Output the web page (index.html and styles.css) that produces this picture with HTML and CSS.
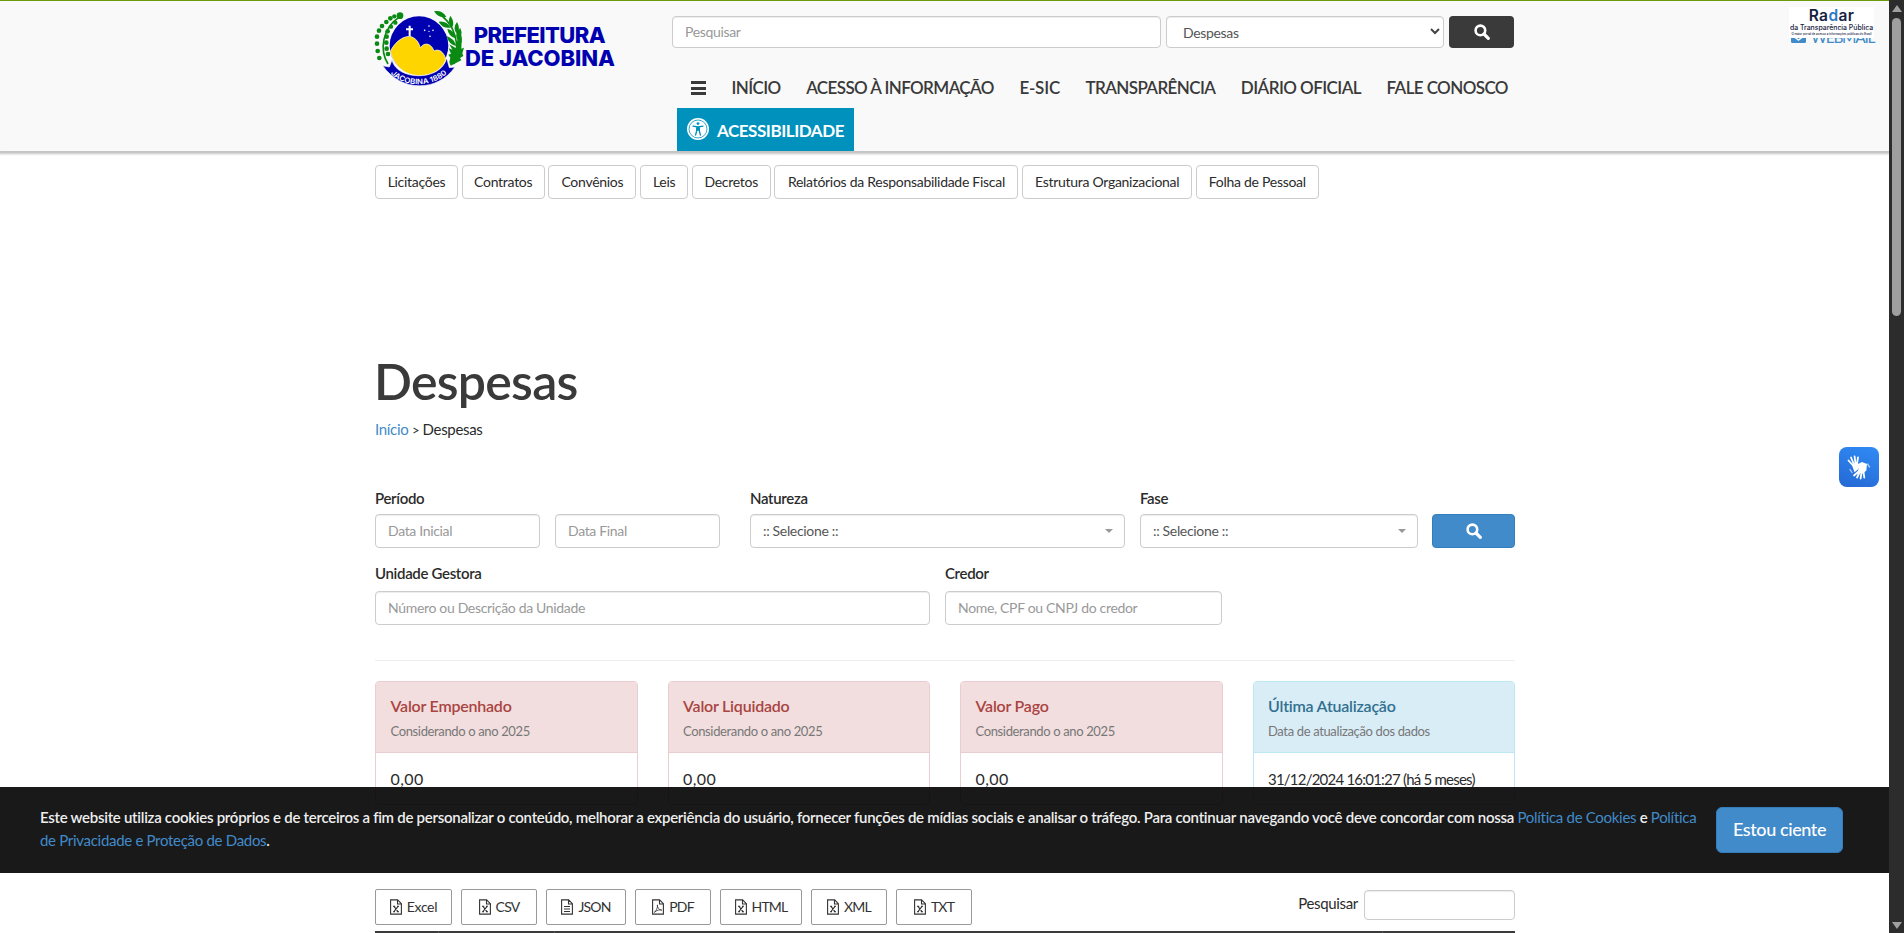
FILE: index.html
```html
<!DOCTYPE html>
<html lang="pt-BR">
<head>
<meta charset="utf-8">
<title>Despesas</title>
<link rel="stylesheet" href="styles.css">
</head>
<body>
<svg class="defs" aria-hidden="true">
  <symbol id="search" viewBox="0 0 16 16"><circle cx="6.4" cy="6.4" r="4.8" fill="none" stroke="currentColor" stroke-width="2.6"/><path d="M10 10l4.3 4.3" stroke="currentColor" stroke-width="3.2" stroke-linecap="round"/></symbol>
  <symbol id="xfile" viewBox="0 0 12 16"><path d="M.6 .9h7l3.8 3.8v10.4H.6zM7.5 1v4h4" fill="none" stroke="currentColor" stroke-width="1.1"/><path d="M3.8 7.2l4.4 5.6M8.2 7.2l-4.4 5.6M3 7.2h2.2M7 7.2h2M3 12.8h2M6.800 12.800h2.200" stroke="currentColor" stroke-width="1.1"/></symbol>
  <symbol id="tfile" viewBox="0 0 12 16"><path d="M.6 .9h7l3.8 3.800v10.400H.6zM7.500 1v4h4M3 7.500h6M3 10h6M3 12.500h6" fill="none" stroke="currentColor" stroke-width="1.1"/></symbol>
  <symbol id="pfile" viewBox="0 0 12 16"><path d="M.6 .9h7l3.800 3.800v10.400H.6zM7.500 1v4h4" fill="none" stroke="currentColor" stroke-width="1.1"/><path d="M2.200 13.400C4 12.500 6 8.500 5.400 5.900 5 7.500 6.500 11 9.900 11.200 8.500 10.400 5 10.900 2.200 13.400z" fill="none" stroke="currentColor" stroke-width=".8"/></symbol>
</svg>

<div class="page">
  <header class="header">
    <div class="container header-inner">
      <svg class="logo" viewBox="30 15 750 255">
        <g fill="none" stroke="#0a8a12" stroke-width="5">
          <path d="M84 192C58 150 66 84 120 50"/>
          <path d="M282 192C300 140 290 70 228 36"/>
        </g>
        <g fill="#0a8a12">
          <circle cx="120" cy="47" r="10"/><circle cx="103" cy="49" r="6.500"/><circle cx="91" cy="55" r="7"/><circle cx="106" cy="68" r="6.500"/><circle cx="79" cy="66" r="7"/><circle cx="93" cy="80" r="6.500"/><circle cx="66" cy="78" r="7"/><circle cx="83" cy="94" r="7"/><circle cx="57" cy="92" r="7"/><circle cx="80" cy="110" r="7"/><circle cx="51" cy="110" r="7"/><circle cx="79" cy="128" r="7"/><circle cx="51" cy="131" r="7"/><circle cx="80" cy="146" r="7"/><circle cx="53" cy="153" r="7"/><circle cx="84" cy="162" r="7"/><circle cx="58" cy="174" r="7"/>
          <path d="M222 34q25-4 37 17q-23 5-37-17zM271 47q15 20 5 36q-16-15-5-36zM236 65q24-4 36 18q-24 4-36-18zM291 66q12 20 0 36q-15-17 0-36zM262 86q22 6 25 29q-22-6-25-29zM301 84q10 22-8 38q-12-22 8-38zM260 108q20 6 30 30q-24-3-30-30zM304 106q7 24-11 38q-10-22 11-38z"/>
          <path d="M305 120l-1 26 8-3-5 17 3 8-10 6 4 7-32 16-4-10 3-14-6-9 8-3-7-16 11 4-9-16 19 11z"/>
        </g>
        <circle cx="177" cy="137" r="88" fill="#0000b0"/>
        <path d="M91 154C103 130 124 110 148 109 167 112 177 127 181 144 190 127 213 127 222 153 236 145 251 155 258 178 247 209 217 227 177 227 133 226 101 196 91 154z" fill="#ffd500" stroke="#fff" stroke-width="2"/>
        <path d="M149 77v32M138 88h21" stroke="#fff" stroke-width="6"/>
        <g fill="#fff"><circle cx="207" cy="78" r="2.500"/><circle cx="194" cy="91" r="2.500"/><circle cx="219" cy="91" r="2.500"/><circle cx="207" cy="94" r="2"/><circle cx="210" cy="109" r="2.500"/></g>
        <path d="M68 197l20 4 8-21C110 242 243 246 260 174l8 29 17-2C232 277 124 277 68 197z" fill="#0000b0" stroke="#f9f9f9" stroke-width="2"/>
        <path id="ribbon" d="M92 220C132 264 222 265 267 214" fill="none"/>
        <text class="ribbon-text"><textPath href="#ribbon" textLength="186" lengthAdjust="spacingAndGlyphs">JACOBINA 1880</textPath></text>
        <text class="logo-text" x="341" y="129" textLength="396">PREFEITURA</text>
        <text class="logo-text" x="315" y="197" textLength="450">DE JACOBINA</text>
      </svg>
      <div class="header-main">
        <div class="site-search">
          <div class="field search-text">Pesquisar</div>
          <div class="field search-select"><span>Despesas</span><svg width="10" height="7" viewBox="0 0 10 7"><path d="M1 1l4 4 4-4" fill="none" stroke="#444" stroke-width="2"/></svg></div>
          <div class="search-go"><svg width="16" height="16"><use href="#search"/></svg></div>
        </div>
        <nav class="nav">
          <a class="burger"><i></i><i></i><i></i></a>
          <a>INÍCIO</a><a>ACESSO À INFORMAÇÃO</a><a class="esic">E-SIC</a><a>TRANSPARÊNCIA</a><a class="diario">DIÁRIO OFICIAL</a><a>FALE CONOSCO</a>
        </nav>
        <a class="access">
          <svg width="22" height="22" viewBox="0 0 22 22"><circle cx="11" cy="11" r="11" fill="#fff"/><circle cx="11" cy="11" r="9" fill="none" stroke="#0092bd" stroke-width=".8"/><circle cx="11" cy="5.600" r="1.400" fill="#0092bd"/><path d="M6 8.200l5 .8 5-.8M9.700 9v3.600L8.600 17M12.300 9v3.600L13.400 17" fill="none" stroke="#0092bd" stroke-width="1.300" stroke-linecap="round"/><path d="M9.500 8.800h3v4h-3z" fill="#0092bd"/></svg>
          <span>ACESSIBILIDADE</span>
        </a>
      </div>
    </div>
    <div class="webmail"><svg width="15" height="12"><rect width="15" height="12" rx="1.500" fill="#428bca"/><path d="M1 4l6.500 5L14 4" fill="none" stroke="#f9f9f9" stroke-width="1.500"/></svg><span>WEBMAIL</span></div>
    <div class="radar">
      <b>Ra<em>d</em>ar</b>
      <span>da Transparência Pública</span>
      <small>O maior portal de acesso a informações públicas do Brasil</small>
    </div>
  </header>

  <main class="container">
    <div class="quick">
      <a class="w83">Licitações</a><a class="w83">Contratos</a><a class="w88">Convênios</a><a class="w49">Leis</a><a class="w79">Decretos</a><a class="w244">Relatórios da Responsabilidade Fiscal</a><a class="w170">Estrutura Organizacional</a><a class="w123">Folha de Pessoal</a>
    </div>
    <h1>Despesas</h1>
    <p class="crumb"><a>Início</a> <span class="gt">&gt;</span> Despesas</p>

    <div class="form-row first">
      <div class="group"><label>Período</label>
        <div class="dates"><div class="field">Data Inicial</div><div class="field">Data Final</div></div></div>
      <div class="group natureza"><label>Natureza</label><div class="field picker">:: Selecione ::<i></i></div></div>
      <div class="group fase"><label>Fase</label><div class="field picker">:: Selecione ::<i></i></div></div>
      <div class="filter-go"><svg width="16" height="16"><use href="#search"/></svg></div>
    </div>
    <div class="form-row second">
      <div class="group unidade"><label>Unidade Gestora</label><div class="field">Número ou Descrição da Unidade</div></div>
      <div class="group credor"><label>Credor</label><div class="field">Nome, CPF ou CNPJ do credor</div></div>
    </div>

    <div class="cards">
      <section class="card"><header><h2>Valor Empenhado</h2><p>Considerando o ano 2025</p></header><div class="value">0,00</div></section>
      <section class="card"><header><h2>Valor Liquidado</h2><p>Considerando o ano 2025</p></header><div class="value">0,00</div></section>
      <section class="card"><header><h2>Valor Pago</h2><p>Considerando o ano 2025</p></header><div class="value">0,00</div></section>
      <section class="card info"><header><h2>Última Atualização</h2><p>Data de atualização dos dados</p></header><div class="value date">31/12/2024 16:01:27 (há 5 meses)</div></section>
    </div>

    <div class="tools">
      <div class="exports">
        <a class="e77"><svg><use href="#xfile"/></svg><span>Excel</span></a>
        <a class="e76"><svg><use href="#xfile"/></svg><span class="caps">CSV</span></a>
        <a class="e80"><svg><use href="#tfile"/></svg><span class="caps">JSON</span></a>
        <a class="e76"><svg><use href="#pfile"/></svg><span class="caps">PDF</span></a>
        <a class="e82"><svg><use href="#xfile"/></svg><span class="caps">HTML</span></a>
        <a class="e76"><svg><use href="#xfile"/></svg><span class="caps">XML</span></a>
        <a class="e76"><svg><use href="#xfile"/></svg><span class="caps">TXT</span></a>
      </div>
      <div class="table-search"><span>Pesquisar</span><div class="field"></div></div>
    </div>
    <div class="thead"><i></i><i></i><i></i><i></i></div>
  </main>

  <div class="libras">
    <svg width="26" height="26" viewBox="0 0 26 26" fill="none" stroke="#fff" stroke-linecap="round"><path d="M7.500 12L2.500 6.500M8 10.500L5 3.500M9.500 9.500L8.600 2.500M11 10L12 3.500" stroke-width="1.800"/><path d="M7 11.500l3.500-2 2.300 1.500-1.500 4-2.500 2z" fill="#fff" stroke-width="1.500"/><path d="M12 18L8 21.500M13.500 18.500L11 23.500M15.500 18.500L14.600 24.500M17.500 18L18.300 23.500" stroke-width="1.800"/><path d="M11 11.500l5-2.500 4 1.500-.5 5.500-3 2.500-4-.5 1-3.500z" fill="#fff" stroke-width="1.800"/><path d="M21.500 10l2 3" stroke-width="1.500" opacity=".55"/><path d="M4 15.500l2 3" stroke-width="1.200" opacity=".7"/></svg>
  </div>

  <div class="cookies">
    <p>Este website utiliza cookies próprios e de terceiros a fim de personalizar o conteúdo, melhorar a experiência do usuário, fornecer funções de mídias sociais e analisar o tráfego. Para continuar navegando você deve concordar com nossa <a>Política de Cookies</a> e <a>Política<br>de Privacidade e Proteção de Dados</a>.</p>
    <div class="agree">Estou ciente</div>
  </div>
</div>

<div class="scrollbar"><i class="up"></i><i class="thumb"></i><i class="down"></i></div>
</body>
</html>
```
FILE: styles.css
```css
* { box-sizing: border-box; }
body {
  margin: 0;
  display: flex;
  height: 933px;
  overflow: hidden;
  background: #fff;
  color: #2b2b2b;
  font: 15px/20px Lato, "Open Sans", sans-serif;
  letter-spacing: -0.33px;
}
.defs { position: absolute; width: 0; height: 0; }
.page { position: relative; width: 1889px; height: 933px; overflow: hidden; }
.container { width: 1140px; margin: 0 auto 0 375px; }

.header {
  position: relative;
  height: 151px;
  background: #f9f9f9;
  border-top: 1px solid #6b9b0c;
  box-shadow: 0 2px 2px 1px #c4c4c4;
}
.header-inner { display: flex; }
.logo { width: 250px; height: 85px; margin: 4px 52px 0 -5px; flex: none; }
.logo-text { font: 800 66px Inter, sans-serif; letter-spacing: 0; fill: #0000b0; }
.ribbon-text { font: 600 22px Inter, sans-serif; letter-spacing: 0; fill: #fff; }
.header-main { width: 843px; }

.field {
  display: flex;
  align-items: center;
  height: 34px;
  padding: 0 12px;
  background: #fff;
  border: 1px solid #ccc;
  border-radius: 4px;
  box-shadow: inset 0 1px 1px rgba(0, 0, 0, .075);
  color: #999;
  font-size: 14px;
}
.site-search { display: flex; margin-top: 15px; }
.site-search .field { height: 32px; }
.search-text { width: 489px; margin-right: 5px; }
.search-select { width: 278px; margin-right: 5px; padding: 2px 3px 0 16px; justify-content: space-between; }
.search-select span { color: #555; }
.search-select svg { margin-top: -3px; }
.search-go {
  display: flex;
  align-items: center;
  justify-content: center;
  width: 65px;
  height: 32px;
  border-radius: 4px;
  background: #3a3a3a;
  color: #fff;
}
.nav {
  display: flex;
  gap: 25.500px;
  height: 44px;
  margin: 18px 0 0 19px;
  align-items: center;
  color: #3a3a3a;
  font-size: 17px;
  font-weight: 600;
  letter-spacing: -0.6px;
  white-space: nowrap;
}
.burger { display: grid; gap: 2.500px; width: 15px; }
.burger i { height: 3px; background: #3a3a3a; }
.nav .esic { letter-spacing: -0.2px; }
.nav .diario { letter-spacing: -0.55px; }
.access {
  display: flex;
  gap: 8px;
  width: 177px;
  height: 43px;
  margin: -2px 0 0 5px;
  padding: 10px 0 0 10px;
  background: #0092bd;
  color: #fff;
  font-size: 17px;
  font-weight: 700;
  letter-spacing: -0.45px;
}
.access span { padding-top: 3px; }

.webmail {
  position: absolute;
  top: 29px;
  left: 1791px;
  display: flex;
  align-items: flex-end;
  height: 13px;
  gap: 5px;
  color: #428bca;
  font-size: 15.500px;
  line-height: 11px;
  letter-spacing: -1.3px;
}
.radar {
  position: absolute;
  top: 6px;
  left: 1789px;
  width: 85px;
  height: 31px;
  background: #fff;
  color: #16213f;
  text-align: center;
  letter-spacing: 0;
}
.radar b { display: block; font: 600 15.500px/17px Inter, sans-serif; letter-spacing: .4px; }
.radar em { font-style: normal; color: #2b7cc4; }
.radar span { display: block; font: 500 6.9px/8px Inter, sans-serif; white-space: nowrap; }
.radar small { display: block; font: 500 2.9px/5px Inter, sans-serif; white-space: nowrap; }

.quick { display: flex; gap: 3.700px; margin-top: 14px; }
.quick a {
  height: 34px;
  border: 1px solid #ccc;
  border-radius: 4px;
  font-size: 14px;
  line-height: 32px;
  letter-spacing: -0.28px;
  text-align: center;
  white-space: nowrap;
}
.w83 { width: 83px; }
.w88 { width: 88px; }
.w49 { width: 48px; }
.w79 { width: 79px; }
.w244 { width: 244px; }
.w170 { width: 170px; }
.w123 { width: 123px; }

h1 {
  margin: 152px 0 0 -1px;
  color: #3a3a3a;
  font-size: 50px;
  font-weight: 600;
  line-height: 60px;
  letter-spacing: -0.75px;
}
.crumb { margin: 8px 0 0; }
.crumb a { color: #428bca; }
.gt { font-size: 13px; }

.form-row { display: flex; }
.first { margin-top: 48px; }
.second { margin-top: 13px; gap: 15px; }
label { display: block; height: 26px; color: #2b2b2b; font-weight: 600; line-height: 20px; }
.second label { height: 30px; line-height: 24px; }
.dates { display: flex; gap: 15px; }
.dates .field { width: 165px; }
.natureza { width: 375px; margin: 0 15px 0 30px; }
.fase { width: 278px; }
.picker { position: relative; color: #555; justify-content: space-between; padding-right: 11px; }
.picker i { border: 4px solid transparent; border-top: 4px solid #999; border-bottom: 0; }
.filter-go {
  display: flex;
  align-items: center;
  justify-content: center;
  width: 83px;
  height: 34px;
  margin: 26px 0 0 14px;
  background: #428bca;
  border: 1px solid #357ebd;
  border-radius: 4px;
  color: #fff;
}
.unidade { width: 555px; }
.credor { width: 277px; }

.cards {
  display: grid;
  grid-template-columns: repeat(4, 262.500px);
  gap: 30px;
  margin-top: 35px;
  padding-top: 20px;
  border-top: 1px solid #eee;
}
.card { height: 124px; border: 1px solid #ebccd1; border-radius: 4px; overflow: hidden; }
.card header { height: 71px; padding: 13px 14.500px; background: #f2dede; border-bottom: 1px solid #ebccd1; color: #a94442; }
.card h2 { margin: 0; font-size: 16px; font-weight: 600; line-height: 22px; letter-spacing: -0.22px; }
.card p { margin: 4px 0 0; color: #777; font-size: 13px; line-height: 20px; letter-spacing: -0.36px; }
.value { padding: 15px 14.500px; font-size: 16px; line-height: 22px; letter-spacing: .4px; }
.value.date { letter-spacing: -0.78px; font-size: 15px; white-space: nowrap; }
.info { border-color: #bce8f1; }
.info header { background: #d9edf7; border-color: #bce8f1; color: #31708f; }

.tools { display: flex; justify-content: space-between; margin-top: 84px; }
.exports { display: flex; gap: 9px; }
.exports a {
  display: flex;
  align-items: center;
  justify-content: center;
  gap: 5px;
  height: 36px;
  border: 1px solid #999;
  border-radius: 2px;
  color: #333;
  font-size: 14px;
}
.exports svg { width: 12px; height: 16px; }
.exports .caps { letter-spacing: -0.8px; }
.e77 { width: 77px; }
.e76 { width: 76px; }
.e80 { width: 80px; }
.e82 { width: 82px; }
.table-search { display: flex; gap: 6px; }
.table-search span { padding-top: 4px; }
.table-search .field { width: 151px; height: 30px; margin-top: 1px; }
.thead { display: grid; grid-template-columns: 63px 116px 828px 1fr; height: 6px; margin-top: 6px; background: #3a3a3a; }
.thead i + i { border-left: 1px solid #555; }

.libras {
  position: absolute;
  left: 1839px;
  top: 447px;
  display: flex;
  align-items: center;
  justify-content: center;
  width: 40px;
  height: 40px;
  border-radius: 8px;
  background: linear-gradient(200deg, #318bf5, #2468d4);
}
.cookies {
  position: absolute;
  left: 0;
  top: 787px;
  display: flex;
  width: 1889px;
  height: 86px;
  padding: 20px 46px 0 40px;
  justify-content: space-between;
  background: rgba(0, 0, 0, .9);
  color: #eee;
}
.cookies p { margin: -1px 0 0; font-weight: 600; line-height: 22.500px; letter-spacing: -0.272px; white-space: nowrap; }
.cookies a { color: #428bca; font-weight: 400; letter-spacing: -0.3px; }
.agree {
  width: 127px;
  height: 46px;
  background: #428bca;
  border: 1px solid #357ebd;
  border-radius: 6px;
  color: #fff;
  font-size: 18px;
  font-weight: 500;
  line-height: 42px;
  letter-spacing: -0.4px;
  text-align: center;
}

.scrollbar { position: relative; width: 15px; height: 933px; background: #2c2c2c; }
.scrollbar i { position: absolute; }
.up { left: 3px; top: 5px; border: 5px solid transparent; border-top: 0; border-bottom: 7px solid #9f9f9f; }
.thumb { left: 3px; top: 18px; width: 9px; height: 298px; border-radius: 5px; background: #9f9f9f; }
.down { left: 3px; bottom: 4px; border: 5px solid transparent; border-bottom: 0; border-top: 7px solid #9f9f9f; }
```
